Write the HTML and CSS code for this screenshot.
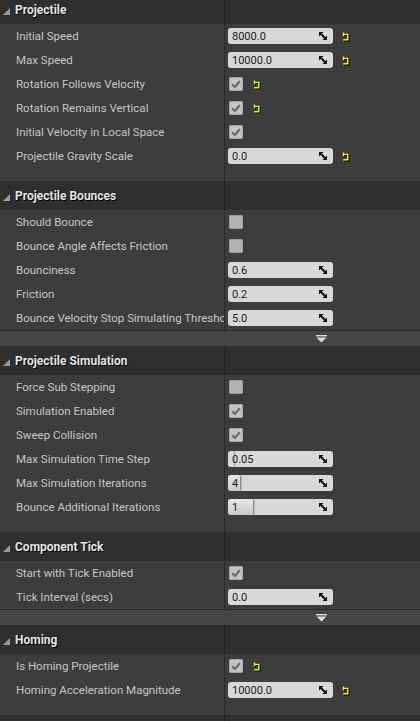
FILE: index.html
```html
<!DOCTYPE html>
<html>
<head>
<meta charset="utf-8">
<link rel="stylesheet" href="styles.css">
</head>
<body>
<svg width="0" height="0" class="defs">
  <defs>
    <g id="spin"><polygon points="0,0 4.5,0 0,4.5" /><polygon points="8,3.5 8,8 3.5,8" /><line x1="1" y1="1" x2="7" y2="7" stroke="#111" stroke-width="2"/></g>
    <g id="reset" fill="none" stroke="#f2f200" stroke-width="1.4"><path d="M2.5 0.5 V4.3"/><path d="M2 2.4 H6.8 V7.8 H2.2"/></g>
    <g id="check"><path d="M3.2 7.4 L5.9 10 L10.8 4.2" fill="none" stroke="#6a6a6a" stroke-width="2.2"/></g>
    <g id="tri"><polygon points="7,0 7,7 0,7"/></g>
  </defs>
</svg>
<div class="panel">

  <div class="cat-head"><div class="cat-title"><svg class="tri" viewBox="0 0 7 7"><use href="#tri"/></svg>Projectile</div><div class="cat-v"></div></div>
  <div class="row"><div class="name">Initial Speed</div><div class="val"><div class="num"><span>8000.0</span><svg class="spin" viewBox="0 0 8 8"><use href="#spin"/></svg></div><svg class="reset" viewBox="0 0 8 9"><use href="#reset"/></svg></div></div>
  <div class="row"><div class="name">Max Speed</div><div class="val"><div class="num"><span>10000.0</span><svg class="spin" viewBox="0 0 8 8"><use href="#spin"/></svg></div><svg class="reset" viewBox="0 0 8 9"><use href="#reset"/></svg></div></div>
  <div class="row"><div class="name">Rotation Follows Velocity</div><div class="val"><div class="chk on"><svg viewBox="0 0 14 14"><use href="#check"/></svg></div><svg class="reset" viewBox="0 0 8 9"><use href="#reset"/></svg></div></div>
  <div class="row"><div class="name">Rotation Remains Vertical</div><div class="val"><div class="chk on"><svg viewBox="0 0 14 14"><use href="#check"/></svg></div><svg class="reset" viewBox="0 0 8 9"><use href="#reset"/></svg></div></div>
  <div class="row"><div class="name">Initial Velocity in Local Space</div><div class="val"><div class="chk on"><svg viewBox="0 0 14 14"><use href="#check"/></svg></div></div></div>
  <div class="row"><div class="name">Projectile Gravity Scale</div><div class="val"><div class="num"><span>0.0</span><svg class="spin" viewBox="0 0 8 8"><use href="#spin"/></svg></div><svg class="reset" viewBox="0 0 8 9"><use href="#reset"/></svg></div></div>
  <div class="spacer"><div></div><div class="sp-v"></div></div>

  <div class="cat-head"><div class="cat-title"><svg class="tri" viewBox="0 0 7 7"><use href="#tri"/></svg>Projectile Bounces</div><div class="cat-v"></div></div>
  <div class="row"><div class="name">Should Bounce</div><div class="val"><div class="chk"></div></div></div>
  <div class="row"><div class="name">Bounce Angle Affects Friction</div><div class="val"><div class="chk"></div></div></div>
  <div class="row"><div class="name">Bounciness</div><div class="val"><div class="num"><span>0.6</span><svg class="spin" viewBox="0 0 8 8"><use href="#spin"/></svg></div></div></div>
  <div class="row"><div class="name">Friction</div><div class="val"><div class="num"><span>0.2</span><svg class="spin" viewBox="0 0 8 8"><use href="#spin"/></svg></div></div></div>
  <div class="row"><div class="name">Bounce Velocity Stop Simulating Threshold</div><div class="val"><div class="num"><span>5.0</span><svg class="spin" viewBox="0 0 8 8"><use href="#spin"/></svg></div></div></div>
  <div class="expander"><div></div><div class="exp-c"><svg class="exp" viewBox="0 0 11 8"><rect x="0" y="0" width="11" height="1.4"/><polygon points="0.5,2.6 10.5,2.6 5.5,7.6"/></svg></div></div>

  <div class="cat-head"><div class="cat-title"><svg class="tri" viewBox="0 0 7 7"><use href="#tri"/></svg>Projectile Simulation</div><div class="cat-v"></div></div>
  <div class="row"><div class="name">Force Sub Stepping</div><div class="val"><div class="chk"></div></div></div>
  <div class="row"><div class="name">Simulation Enabled</div><div class="val"><div class="chk on"><svg viewBox="0 0 14 14"><use href="#check"/></svg></div></div></div>
  <div class="row"><div class="name">Sweep Collision</div><div class="val"><div class="chk on"><svg viewBox="0 0 14 14"><use href="#check"/></svg></div></div></div>
  <div class="row"><div class="name">Max Simulation Time Step</div><div class="val"><div class="num slider"><div class="thumb thin" style="width:6px"></div><span>0.05</span><svg class="spin" viewBox="0 0 8 8"><use href="#spin"/></svg></div></div></div>
  <div class="row"><div class="name">Max Simulation Iterations</div><div class="val"><div class="num slider"><div class="thumb" style="width:12px"></div><span>4</span><svg class="spin" viewBox="0 0 8 8"><use href="#spin"/></svg></div></div></div>
  <div class="row"><div class="name">Bounce Additional Iterations</div><div class="val"><div class="num slider"><div class="thumb" style="width:25px"></div><span>1</span><svg class="spin" viewBox="0 0 8 8"><use href="#spin"/></svg></div></div></div>
  <div class="spacer"><div></div><div class="sp-v"></div></div>

  <div class="cat-head"><div class="cat-title"><svg class="tri" viewBox="0 0 7 7"><use href="#tri"/></svg>Component Tick</div><div class="cat-v"></div></div>
  <div class="row"><div class="name">Start with Tick Enabled</div><div class="val"><div class="chk on"><svg viewBox="0 0 14 14"><use href="#check"/></svg></div></div></div>
  <div class="row"><div class="name">Tick Interval (secs)</div><div class="val"><div class="num"><span>0.0</span><svg class="spin" viewBox="0 0 8 8"><use href="#spin"/></svg></div></div></div>
  <div class="expander"><div></div><div class="exp-c"><svg class="exp" viewBox="0 0 11 8"><rect x="0" y="0" width="11" height="1.4"/><polygon points="0.5,2.6 10.5,2.6 5.5,7.6"/></svg></div></div>

  <div class="cat-head"><div class="cat-title"><svg class="tri" viewBox="0 0 7 7"><use href="#tri"/></svg>Homing</div><div class="cat-v"></div></div>
  <div class="row"><div class="name">Is Homing Projectile</div><div class="val"><div class="chk on"><svg viewBox="0 0 14 14"><use href="#check"/></svg></div><svg class="reset" viewBox="0 0 8 9"><use href="#reset"/></svg></div></div>
  <div class="row"><div class="name">Homing Acceleration Magnitude</div><div class="val"><div class="num"><span>10000.0</span><svg class="spin" viewBox="0 0 8 8"><use href="#spin"/></svg></div><svg class="reset" viewBox="0 0 8 9"><use href="#reset"/></svg></div></div>
  <div class="spacer"><div></div><div class="sp-v"></div></div>

  <div class="cat-head"><div class="cat-title"></div><div class="cat-v"></div></div>
</div>
</body>
</html>
```

FILE: styles.css
```css
html, body {
  margin: 0;
  padding: 0;
  background: #3d3d3d;
}
body {
  width: 420px;
  height: 721px;
  overflow: hidden;
  font-family: Roboto, "Liberation Sans", sans-serif;
}
.defs {
  position: absolute;
  width: 0;
  height: 0;
}
.panel {
  margin-top: -5px;
}
.cat-head {
  display: grid;
  grid-template-columns: 224px 1fr;
  height: 29px;
  background: #2f2f2f;
}
.cat-title {
  display: flex;
  align-items: center;
  font-weight: 700;
  font-size: 12px;
  color: #e4e4e4;
  text-shadow: 1px 1px 0 #000;
  white-space: nowrap;
}
.tri {
  width: 7px;
  height: 7px;
  margin: 3px 5px 0 3px;
  fill: #9a9a9a;
}
.cat-v {
  border-left: 1px solid #252525;
}
.row {
  display: grid;
  grid-template-columns: 224px 1fr;
  height: 24px;
  background: #3d3d3d;
}
.name {
  padding-left: 16px;
  display: flex;
  align-items: center;
  font-size: 11.5px;
  color: #c6c6c6;
  white-space: nowrap;
  overflow: hidden;
}
.val {
  border-left: 1px solid #2a2a2a;
  display: flex;
  align-items: center;
  padding-left: 3px;
  gap: 8px;
}
.num {
  position: relative;
  width: 105px;
  height: 16px;
  border-radius: 3px;
  background: #d8d8d8;
  box-sizing: border-box;
  padding: 0 6px 0 4px;
  display: flex;
  align-items: center;
  justify-content: space-between;
  font-size: 11px;
  color: #1a1a1a;
  overflow: hidden;
}
.num span {
  position: relative;
}
.spin {
  width: 8px;
  height: 8px;
  fill: #111;
  position: relative;
}
.thumb {
  position: absolute;
  left: 0;
  top: 0;
  bottom: 0;
  background: linear-gradient(#e6e6e6, #c9c9c9);
  border-right: 1px solid #8a8a8a;
  border-radius: 3px 2px 2px 3px;
  box-shadow: 1px 0 1px rgba(0,0,0,0.15);
}
.thumb.thin {
  background: #d8d8d8;
  border-right: 1px solid #9a9a9a;
  box-shadow: none;
}
.reset {
  width: 8px;
  height: 9px;
  filter: drop-shadow(1px 1px 0 #000);
}
.chk {
  width: 14px;
  height: 14px;
  margin-left: 1px;
  margin-right: 1px;
  border-radius: 2px;
  background: #b2b2b2;
  box-shadow: inset 0 0 0 0.5px #8a8a8a;
}
.chk.on {
  background: #c3c3c3;
}
.chk svg {
  display: block;
  width: 14px;
  height: 14px;
}
.spacer {
  display: grid;
  grid-template-columns: 224px 1fr;
  height: 13px;
  background: #3d3d3d;
}
.sp-v {
  border-left: 1px solid #2a2a2a;
}
.expander {
  display: grid;
  grid-template-columns: 225px 1fr;
  height: 16px;
  box-sizing: border-box;
  border-top: 1px solid #2b2b2b;
  background: #464646;
}
.exp-c {
  display: flex;
  justify-content: center;
  padding-top: 4px;
  padding-right: 2px;
}
.exp {
  width: 11px;
  height: 8px;
  fill: #dcdcdc;
}
```
